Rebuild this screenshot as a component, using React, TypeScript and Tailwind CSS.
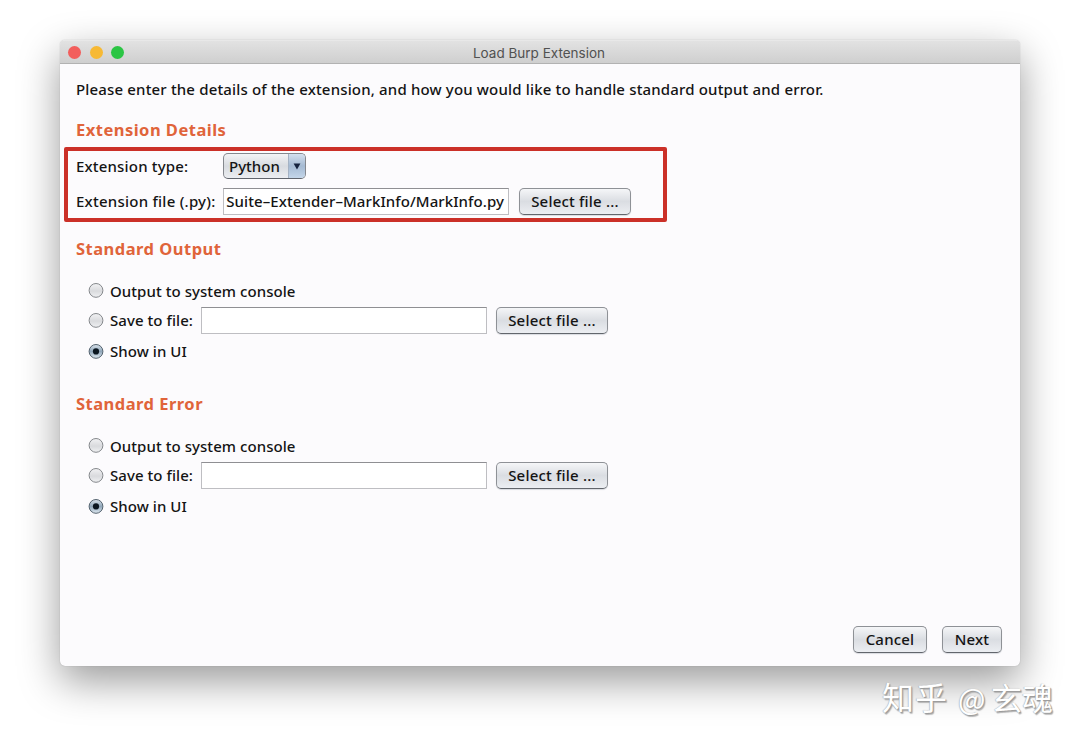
import type { ReactNode } from "react";

function Button({ className, children }: { className: string; children: ReactNode }) {
  return (
    <button
      className={`flex h-[27px] shrink-0 items-center justify-center rounded-[5px] border border-[#8e9196] border-b-[#62666c] bg-linear-to-b from-[#f5f6f8] via-[#dadde2] to-[#eceef2] pb-0.5 whitespace-nowrap shadow-[0_1px_1px_#d9dbe0] ${className}`}
    >
      {children}
    </button>
  );
}

function Field({ children }: { children?: ReactNode }) {
  return (
    <div className="flex h-[27px] w-[286px] shrink-0 items-center justify-end overflow-hidden border border-[#bebec2] border-t-[#8f8f93] bg-white pr-1 pb-0.5 pl-0.5 whitespace-nowrap">
      {children}
    </div>
  );
}

function Radio({ checked = false }: { checked?: boolean }) {
  return (
    <svg className="h-4 w-4 shrink-0" viewBox="0 0 16 16">
      <defs>
        <linearGradient id="radioOff" x1="0" y1="0" x2="0" y2="1">
          <stop offset="0" stopColor="#f2f2f4" />
          <stop offset="0.55" stopColor="#d9dadd" />
          <stop offset="1" stopColor="#f0f1f3" />
        </linearGradient>
        <linearGradient id="radioOn" x1="0" y1="0" x2="0" y2="1">
          <stop offset="0" stopColor="#dce5ee" />
          <stop offset="0.5" stopColor="#8fa5b8" />
          <stop offset="1" stopColor="#e0eaf2" />
        </linearGradient>
      </defs>
      <circle
        cx="8"
        cy="7.4"
        r="6.9"
        fill={checked ? "url(#radioOn)" : "url(#radioOff)"}
        stroke={checked ? "#55636f" : "#85888c"}
        strokeWidth="1"
      />
      {checked && <circle cx="8" cy="7.4" r="3.1" fill="#0b1620" />}
    </svg>
  );
}

function Heading({ children }: { children: ReactNode }) {
  return (
    <h2 className="h-6 text-[16.5px] leading-6 font-bold tracking-[0.48px] whitespace-nowrap text-[#e0643a]">
      {children}
    </h2>
  );
}

function OutputSection({ title }: { title: ReactNode }) {
  return (
    <section className="flex flex-col">
      <Heading>{title}</Heading>
      <div className="mt-5 flex flex-col pl-3">
        <label className="flex h-5 items-center gap-1.5">
          <Radio />
          <span className="tracking-[0.06px]">Output to system console</span>
        </label>
        <div className="mt-1.5 flex h-[27px] items-center">
          <label className="flex w-[113px] items-center gap-1.5">
            <Radio />
            <span className="pb-0.5 tracking-[0.06px]">Save to file:</span>
          </label>
          <Field />
          <Button className="ml-[9px] w-28 tracking-[0.2px]">Select file ...</Button>
        </div>
        <label className="mt-2 flex h-5 items-center gap-1.5">
          <Radio checked />
          <span className="pb-0.5 tracking-[0.06px]">Show in UI</span>
        </label>
      </div>
    </section>
  );
}

export default function App() {
  return (
    <div className="relative h-[744px] w-[1080px] overflow-hidden bg-white pt-10 pl-[60px] font-['Noto_Sans','Open_Sans',sans-serif] text-[15px] leading-5 font-medium text-[#141414]">
      <main className="flex h-[626px] w-[960px] flex-col overflow-hidden rounded-[5px] bg-[#fcfbfd] shadow-[0_0_1px_#777777aa,0_15px_40px_#00000066]">
        <header className="flex h-6 shrink-0 items-center border-t border-b border-t-[#e8e8e8] border-b-[#b2b2b2] bg-linear-to-b from-[#e2e2e2] to-[#cfcfcf] pl-2">
          <div className="flex w-20 gap-[8.5px]">
            <i className="h-[13px] w-[13px] rounded-full bg-[#f25e5c]" />
            <i className="h-[13px] w-[13px] rounded-full bg-[#f7b934]" />
            <i className="h-[13px] w-[13px] rounded-full bg-[#2bc544]" />
          </div>
          <div className="mr-[90px] flex-1 pt-px text-center font-['Inter',sans-serif] text-[13.5px] font-normal text-[#515151]">
            Load Burp Extension
          </div>
        </header>

        <div className="flex flex-1 flex-col pr-[18px] pb-[13px] pl-4">
          <p className="mt-[15px] tracking-[0.16px] whitespace-nowrap">
            Please enter the details of the extension, and how you would like to handle standard output and error.
          </p>
          <div className="mt-[19px]">
            <Heading>Extension Details</Heading>
          </div>

          <section className="mt-[5px] -ml-3 flex h-[75px] w-[603px] flex-col rounded-[2px] border-4 border-[#cb3028] pt-0.5 pl-2">
            <div className="flex h-[26px] items-center">
              <span className="w-[147px] pb-px tracking-[0.17px]">Extension type:</span>
              <div className="flex h-[26px] w-[83px] items-stretch overflow-hidden rounded-[5px] border border-[#85888e] border-b-[#60646c] bg-linear-to-b from-[#f3f4f6] via-[#d8dbe0] to-[#eceef2]">
                <span className="flex w-[64px] items-center pb-px pl-[5px]">Python</span>
                <span className="flex flex-1 items-center justify-center border-l border-[#a4b2c4] bg-linear-to-b from-[#d4e0ee] via-[#a5bad3] to-[#c4d6e9]">
                  <svg className="h-[7px] w-[8px]" viewBox="0 0 8 7">
                    <path d="M0.6 0.5h6.8L4 6.5z" fill="#16233e" />
                  </svg>
                </span>
              </div>
            </div>
            <div className="mt-[9px] flex h-[27px] items-center">
              <span className="w-[147px] pb-0.5 tracking-[0.24px] whitespace-nowrap">Extension file (.py):</span>
              <Field>
                <span className="tracking-[0.08px]">Suite–Extender–MarkInfo/MarkInfo.py</span>
              </Field>
              <Button className="ml-[10px] w-28 tracking-[0.2px]">Select file ...</Button>
            </div>
          </section>

          <div className="mt-[15px]">
            <OutputSection title="Standard Output" />
          </div>
          <div className="mt-[30px]">
            <OutputSection title="Standard Error" />
          </div>

          <footer className="mt-auto flex justify-end gap-[15px]">
            <Button className="w-[74px] tracking-[0.2px]">Cancel</Button>
            <Button className="w-[60px] tracking-[0.2px]">Next</Button>
          </footer>
        </div>
      </main>

      <div className="absolute top-[676px] left-[882px] flex items-baseline font-['Noto_Sans_CJK_SC',sans-serif] text-[32px] leading-10 font-normal whitespace-nowrap text-white [text-shadow:1px_1px_1px_#999,-0.5px_-0.5px_1px_#aaa,1.5px_1.5px_1px_#bbb]">
        <span className="tracking-[1px]">知乎</span>
        <span className="ml-2.5 w-[33px] text-[29px]">@</span>
        <span className="text-[31px]">玄魂</span>
      </div>
    </div>
  );
}
